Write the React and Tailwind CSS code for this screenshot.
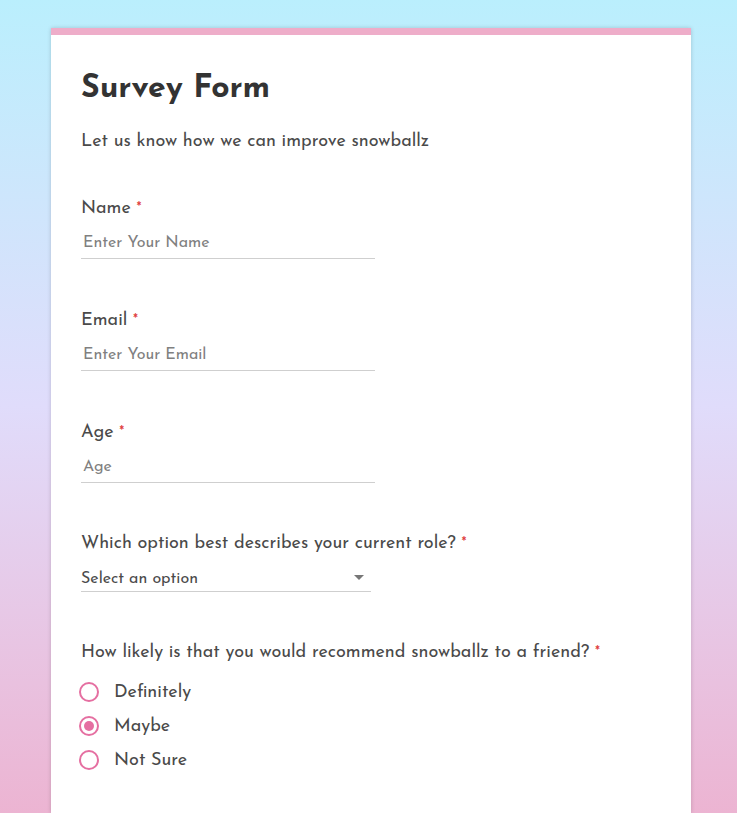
import React from "react";

const font = { fontFamily: '"Josefin Sans", Lato, "Noto Sans", sans-serif' };

function Label({ children }) {
  return (
    <div className="h-[24px] leading-[27px] text-[18px] text-[#4a4a4a]">
      {children} <span className="text-[#e0403f] text-[15px] leading-[15px] align-top relative top-[6px]">*</span>
    </div>
  );
}

function TextInput({ placeholder }) {
  return (
    <div className="mt-[6px] w-[294px] h-[33px] border-b border-[#cfcfcf] flex items-center">
      <span className="pl-[2px] pt-[2px] text-[16px] text-[#808080]">{placeholder}</span>
    </div>
  );
}

function Radio({ label, checked }) {
  return (
    <div className="h-[34px] flex items-center">
      <div className="w-[20px] h-[20px] rounded-full border-2 border-[#e56fa1] flex items-center justify-center -ml-[2px]">
        {checked && <div className="w-[10px] h-[10px] rounded-full bg-[#e56fa1]" />}
      </div>
      <span className="ml-[15px] pt-[2px] text-[18px] text-[#4a4a4a]">{label}</span>
    </div>
  );
}

export default function App() {
  return (
    <div
      className="min-h-[813px] bg-gradient-to-b from-[#baeffd] via-[#e0dcfb] to-[#ecb4d2] pt-[28px]"
      style={font}
    >
      <div className="ml-[51px] w-[640px] min-h-[785px] bg-white border-t-[7px] border-[#eeadc9] shadow-[0_0_4px_rgba(0,0,0,0.18)] px-[30px] pt-[34px]">
        <h1 className="h-[40px] leading-[40px] text-[32px] font-bold text-[#333]">Survey Form</h1>
        <p className="mt-[21px] h-[24px] leading-[24px] text-[18px] text-[#4a4a4a]">
          Let us know how we can improve snowballz
        </p>

        <div className="mt-[42px]">
          <Label>Name</Label>
          <TextInput placeholder="Enter Your Name" />
        </div>
        <div className="mt-[49px]">
          <Label>Email</Label>
          <TextInput placeholder="Enter Your Email" />
        </div>
        <div className="mt-[49px]">
          <Label>Age</Label>
          <TextInput placeholder="Age" />
        </div>
        <div className="mt-[48px]">
          <Label>Which option best describes your current role?</Label>
          <div className="mt-[9px] w-[290px] h-[28px] border-b border-[#cfcfcf] flex items-center justify-between">
            <span className="pt-[2px] text-[16px] text-[#4a4a4a]">Select an option</span>
            <span className="mr-[7px] w-0 h-0 border-l-[5px] border-r-[5px] border-t-[5px] border-l-transparent border-r-transparent border-t-[#777]" />
          </div>
        </div>
        <div className="mt-[48px]">
          <Label>How likely is that you would recommend snowballz to a friend?</Label>
          <div className="mt-[11px]">
            <Radio label="Definitely" />
            <Radio label="Maybe" checked />
            <Radio label="Not Sure" />
          </div>
        </div>
      </div>
    </div>
  );
}
